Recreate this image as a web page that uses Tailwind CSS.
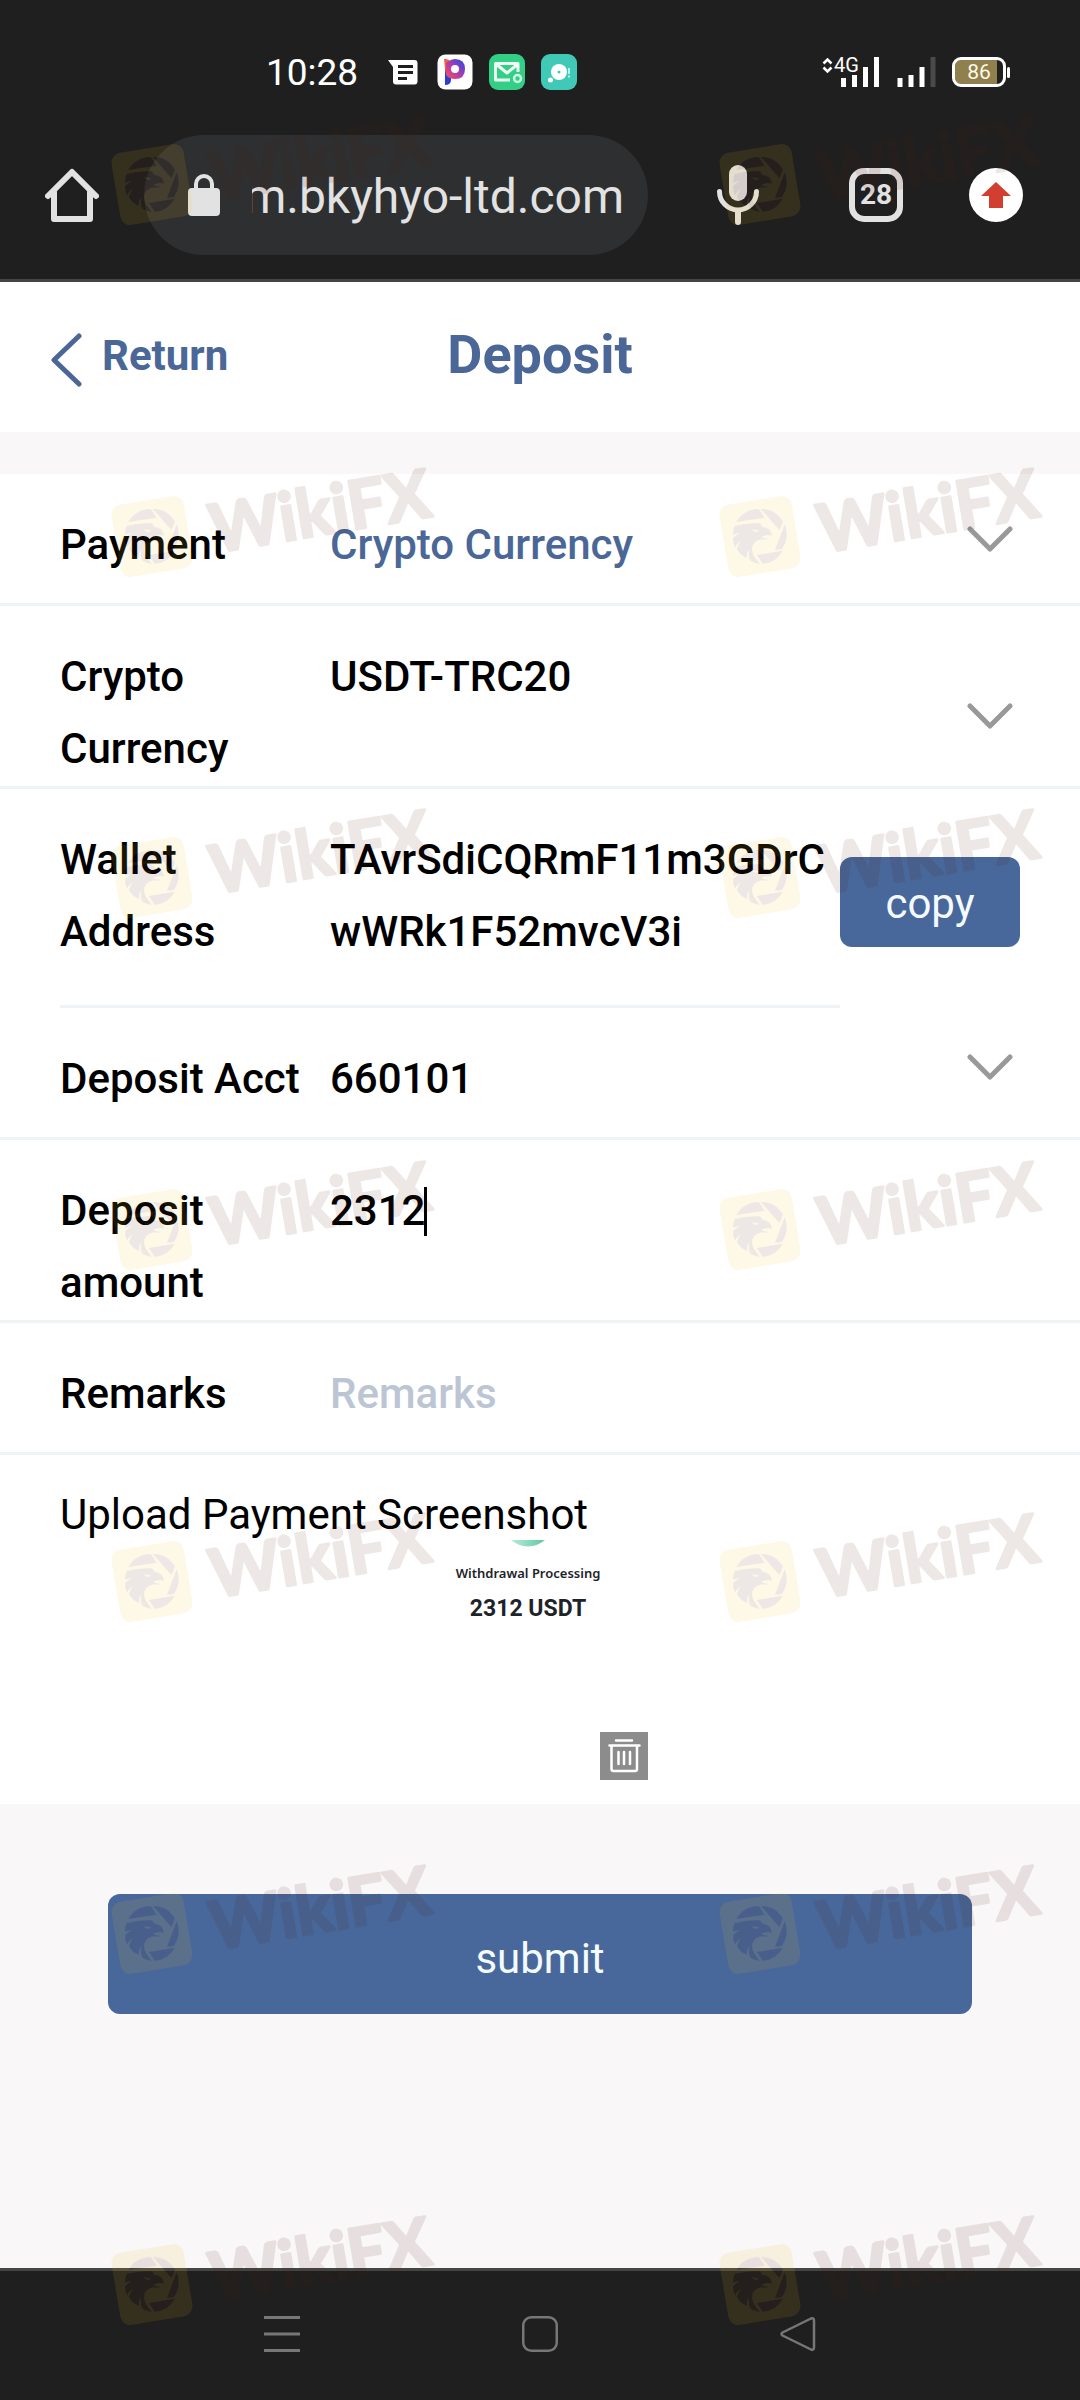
<!DOCTYPE html>
<html lang="en">
<head>
<meta charset="utf-8">
<meta name="viewport" content="width=device-width, initial-scale=1">
<title>Deposit</title>
<script src="https://cdn.jsdelivr.net/npm/@tailwindcss/browser@4"></script>
</head>
<body class="relative flex min-h-screen flex-col overflow-x-hidden bg-[#f9f7f8] font-['Roboto',sans-serif] text-black">

<header class="border-b-3 border-[#444444] bg-[#1f1f1f] pb-6">
  <!-- Status bar -->
  <div class="flex h-[135px] items-center justify-between pt-[9px] pr-[69px] pl-[266px] text-white">
    <div class="flex items-center">
      <time class="w-[122px] text-[37px] leading-none">10:28</time>
      <svg class="h-[25px] w-[30px]" viewBox="0 0 30 25" aria-hidden="true"><path fill="#fff" fill-rule="evenodd" d="M0 0h26.500q3 0 3 3v18.500q0 3-3 3H8q-3 0-3-3V7zM10 5v3h15V5zM10 11v3h15v-3zM10 17v3h9v-3z"/></svg>
      <svg class="ml-[19px] h-[36px] w-[36px]" viewBox="0 0 36 36" aria-hidden="true">
        <defs><linearGradient id="pg" x1="0" y1="1" x2="1" y2="0"><stop offset="0" stop-color="#ff4d5e"/><stop offset=".5" stop-color="#a63db0"/><stop offset="1" stop-color="#1e4be8"/></linearGradient></defs>
        <rect width="35" height="35" x=".5" y=".5" rx="8" fill="#fff"/>
        <path fill="#2a3fd0" d="M8 14h6v12q0 5-6 5z"/>
        <path fill="#ff5a3c" d="M7 5q7-1 7 6v11q-6 0-6-8z"/>
        <path fill="url(#pg)" fill-rule="evenodd" d="M12 7Q15 5 18 5q10 0 10 10t-10 10q-6 0-9-4V9zM18 11a4 4 0 1 0 0 8 4 4 0 0 0 0-8z"/>
      </svg>
      <svg class="ml-[16px] h-[36px] w-[36px]" viewBox="0 0 36 36" aria-hidden="true">
        <rect width="36" height="36" rx="9" fill="#34cf86"/>
        <path fill="none" stroke="#f0fff6" stroke-width="3" stroke-linejoin="round" d="M29 18V9.500H6.500V26H21M7 10l11 9 11-9"/>
        <circle cx="28.500" cy="24.500" r="3.500" fill="none" stroke="#c9ffe2" stroke-width="2.500"/>
      </svg>
      <svg class="ml-[16px] h-[36px] w-[36px]" viewBox="0 0 36 36" aria-hidden="true">
        <rect width="36" height="36" rx="9" fill="#41c9b8"/>
        <circle cx="18" cy="18" r="8" fill="#fff"/><circle cx="18" cy="18" r="1.500" fill="#41c9b8"/>
        <circle cx="9.500" cy="26" r="2.500" fill="#fff"/><path d="M28 14v6M28 21.500v2" stroke="#d8fff8" stroke-width="1.500"/>
      </svg>
    </div>
    <div class="flex items-center">
      <div class="relative">
        <svg class="h-[30px] w-[57px]" viewBox="0 0 57 30" aria-hidden="true">
          <path fill="none" stroke="#fff" stroke-width="2.500" d="M1.500 6.500 5.500 2.500 9.500 6.500M1.500 10.500 5.500 14.500 9.500 10.500"/>
          <path stroke="#fff" stroke-width="5" d="M21.500 21v9M32.500 18v12M43.500 10v20M54.500 0v30"/>
        </svg>
        <span class="absolute top-0 left-3 text-[20px] leading-[17px]">4G</span>
      </div>
      <svg class="ml-[17px] h-[30px] w-[40px]" viewBox="0 0 40 30" aria-hidden="true"><path stroke="#fff" stroke-width="5" d="M4 21v9M15 18v12M26 10v20"/><path stroke="#4a4a4a" stroke-width="5" d="M37 0v30"/></svg>
      <div class="relative ml-[16px]">
        <svg class="h-[30px] w-[59px]" viewBox="0 0 59 30" aria-hidden="true">
          <path fill="#90804d" d="M3 9q0-6 6-6h36v24H9q-6 0-6-6z"/>
          <rect x="1.500" y="1.500" width="51" height="27" rx="7.500" fill="none" stroke="#fff" stroke-width="3"/>
          <rect x="55" y="10" width="3" height="11" rx="1.500" fill="#fff"/>
        </svg>
        <span class="absolute inset-0 pr-[5px] text-center text-[21px] leading-[30px] text-[#fdfbe8]">86</span>
      </div>
    </div>
  </div>

  <!-- Browser toolbar -->
  <div class="flex h-[120px] items-center pr-[57px] pl-[45px]">
    <button type="button" aria-label="Home">
      <svg class="h-[54px] w-[54px]" viewBox="0 0 54 54" aria-hidden="true"><path fill="none" stroke="#e3e2e2" stroke-width="6" stroke-linejoin="round" stroke-linecap="round" d="M3 28 27 4 51 28M9 24v27h36V24"/></svg>
    </button>
    <div class="ml-[45px] flex h-full min-w-0 flex-1 items-center rounded-full bg-[#2e2f31] pr-6 pl-[44px]">
      <svg class="h-[42px] w-[32px] shrink-0" viewBox="0 0 32 42" aria-hidden="true"><path fill="none" stroke="#e3e2e2" stroke-width="4" d="M8 16V10a8 8 0 0 1 16 0v6"/><rect y="14" width="32" height="28" rx="4" fill="#e3e2e2"/></svg>
      <div class="ml-8 flex min-w-0 flex-1 justify-end overflow-hidden pt-1 text-[48px] leading-[66px] whitespace-nowrap text-[#e3e2e2]"><span>m.bkyhyo-ltd.com</span></div>
    </div>
    <button type="button" class="ml-[69px]" aria-label="Voice search">
      <svg class="h-[60px] w-[42px]" viewBox="0 0 42 60" aria-hidden="true"><rect x="12" width="18" height="36" rx="9" fill="#e3e2e2"/><path fill="none" stroke="#e3e2e2" stroke-width="5" stroke-linecap="round" d="M2.500 26.500a18.500 18.500 0 0 0 37 0"/><path fill="none" stroke="#e3e2e2" stroke-width="6" stroke-linecap="round" d="M21 46v11"/></svg>
    </button>
    <button type="button" class="ml-[90px] size-[54px] rounded-[15px] border-6 border-[#e3e2e2] text-center text-[28px] leading-[42px] font-bold text-[#e3e2e2]" aria-label="28 open tabs">28</button>
    <button type="button" class="ml-[66px]" aria-label="Update available">
      <svg class="size-[54px]" viewBox="0 0 54 54" aria-hidden="true"><circle cx="27" cy="27" r="27" fill="#fff"/><path fill="#d23f31" d="M27 14 42 28H34V40H20V28H12z"/></svg>
    </button>
  </div>
</header>

<main class="flex flex-1 flex-col">
  <div class="grid h-[150px] grid-cols-[1fr_auto_1fr] items-center bg-white px-[51px] text-[#4a6797]">
    <a href="#" class="flex items-center gap-5 text-[42px] leading-none font-bold">
      <svg class="mt-1.5 h-[54px] w-[31px]" viewBox="0 0 31 54" aria-hidden="true"><path fill="none" stroke="#4a6797" stroke-width="5" stroke-linecap="round" stroke-linejoin="round" d="M28 3 3 27 28 51"/></svg>
      <span class="pb-0.5">Return</span>
    </a>
    <h1 class="pb-1 text-[54px] leading-none font-bold">Deposit</h1>
  </div>

  <form class="mt-[42px] text-[42px]">
    <div class="bg-white">
      <div class="flex min-h-[132px] items-start border-b-3 border-[#eff3f6] px-[60px] pt-[35px] leading-[72px] font-medium">
        <label for="payment" class="w-[270px] shrink-0">Payment</label>
        <select id="payment" class="h-[72px] min-w-0 flex-1 appearance-none text-[#4a6797]"><option>Crypto Currency</option></select>
        <svg class="pointer-events-none mt-[17px] mr-[7px] h-[26px] w-[46px] shrink-0" viewBox="0 0 46 26" aria-hidden="true"><path fill="none" stroke="#999" stroke-width="5" stroke-linecap="round" stroke-linejoin="round" d="M3 3 23 23 43 3"/></svg>
      </div>
      <div class="flex items-start border-b-3 border-[#eff3f6] px-[60px] pt-[35px] pb-px leading-[72px] font-medium">
        <label for="currency" class="w-[270px] shrink-0 pr-5">Crypto Currency</label>
        <select id="currency" class="h-[72px] min-w-0 flex-1 appearance-none"><option>USDT-TRC20</option></select>
        <svg class="pointer-events-none mt-[62px] mr-[7px] h-[26px] w-[46px] shrink-0" viewBox="0 0 46 26" aria-hidden="true"><path fill="none" stroke="#999" stroke-width="5" stroke-linecap="round" stroke-linejoin="round" d="M3 3 23 23 43 3"/></svg>
      </div>
      <div class="flex items-start px-[60px]">
        <div class="flex min-h-[219px] min-w-0 flex-1 border-b-3 border-[#eff3f6] pt-[35px] leading-[72px] font-medium">
          <label for="wallet" class="w-[270px] shrink-0 pr-5">Wallet Address</label>
          <output id="wallet" class="min-w-0 flex-1 break-all">TAvrSdiCQRmF11m3GDrCwWRk1F52mvcV3i</output>
        </div>
        <button type="button" class="mt-[68px] h-[90px] w-[180px] shrink-0 rounded-xl bg-[#48679a] pt-0.5 text-[#f4fbff]">copy</button>
      </div>
      <div class="flex min-h-[132px] items-start border-b-3 border-[#eff3f6] px-[60px] pt-[35px] leading-[72px] font-medium">
        <label for="account" class="w-[270px] shrink-0">Deposit Acct</label>
        <select id="account" class="h-[72px] min-w-0 flex-1 appearance-none"><option>660101</option></select>
        <svg class="pointer-events-none mt-[11px] mr-[7px] h-[26px] w-[46px] shrink-0" viewBox="0 0 46 26" aria-hidden="true"><path fill="none" stroke="#999" stroke-width="5" stroke-linecap="round" stroke-linejoin="round" d="M3 3 23 23 43 3"/></svg>
      </div>
      <div class="flex items-start border-b-3 border-[#eff3f6] px-[60px] pt-[35px] pb-px leading-[72px] font-medium">
        <label for="amount" class="w-[270px] shrink-0 pr-5">Deposit amount</label>
        <div class="flex h-[72px] items-center">
          <input id="amount" type="text" inputmode="decimal" value="2312" class="h-[72px] w-[94px] outline-none">
          <span class="h-[49px] w-[3px] bg-black" aria-hidden="true"></span>
        </div>
      </div>
      <div class="flex min-h-[132px] items-start border-b-3 border-[#eff3f6] px-[60px] pt-[35px] leading-[72px] font-medium">
        <label for="remarks" class="w-[270px] shrink-0">Remarks</label>
        <input id="remarks" type="text" placeholder="Remarks" class="h-[72px] min-w-0 flex-1 outline-none placeholder:text-[#bcc5d3]">
      </div>
      <section class="px-[60px] pt-[39px] pb-6">
        <h2 class="leading-[42px]">Upload Payment Screenshot</h2>
        <figure class="relative mt-1 ml-[348px] flex h-[240px] w-[240px] flex-col items-center text-[#1e2329]">
          <svg class="h-[7px] w-[34px]" viewBox="0 0 34 7" aria-hidden="true"><defs><linearGradient id="arc"><stop offset="0" stop-color="#b5ecd9"/><stop offset="1" stop-color="#62c7a3"/></linearGradient></defs><path fill="url(#arc)" d="M0 0h34Q26 6.500 17 6.500T0 0z"/></svg>
          <p class="mt-[17px] font-['Noto_Sans',sans-serif] text-[13px] leading-[18px] font-semibold">Withdrawal Processing</p>
          <p class="mt-3.5 text-[23px] leading-[26px] font-bold">2312 USDT</p>
          <button type="button" class="absolute right-0 bottom-0 size-[48px] bg-[#8c8c8c]" aria-label="Delete screenshot">
            <svg class="size-[48px]" viewBox="0 0 48 48" aria-hidden="true"><path fill="none" stroke="#fff" stroke-width="2.500" stroke-linecap="round" stroke-linejoin="round" d="M16 8.500h16M9.500 13.500h30M11.500 14v23q0 2 2 2h21.500q2 0 2-2V14M18.500 20v12M24 20v12M30 20v12"/></svg>
          </button>
        </figure>
      </section>
    </div>
    <div class="px-[108px] py-[90px]">
      <button type="submit" class="h-[120px] w-full rounded-xl bg-[#48679a] pt-2 text-center text-[#f4fbff]">submit</button>
    </div>
  </form>
</main>

<nav class="flex h-[132px] items-center justify-center gap-[222px] border-t-3 border-[#444644] bg-[#1f1f1f] pb-1">
  <button type="button" aria-label="Recent apps"><svg class="size-[36px]" viewBox="0 0 36 36" aria-hidden="true"><path stroke="#777" stroke-width="3" d="M0 1.500h36M0 18h36M0 34.500h36"/></svg></button>
  <button type="button" aria-label="Home screen"><svg class="size-[36px]" viewBox="0 0 36 36" aria-hidden="true"><rect x="1.250" y="1.250" width="33.500" height="33.500" rx="8" fill="none" stroke="#777" stroke-width="2.500"/></svg></button>
  <button type="button" aria-label="Back"><svg class="size-[36px]" viewBox="0 0 36 36" aria-hidden="true"><path fill="none" stroke="#777" stroke-width="2.500" stroke-linejoin="round" d="M31 2.500 2.500 16.500q-2 1.500 0 3L31 33.500q3 1 3-2v-27q0-3-3-2z"/></svg></button>
</nav>

<!-- Watermark overlay -->
<svg class="pointer-events-none absolute inset-0 h-full w-full" aria-hidden="true">
  <defs>
    <g id="mark">
      <rect x="3.500" y="38" width="73" height="73" rx="10" fill="#f0be19" transform="rotate(-9.500 40 74.500)"/>
      <g transform="scale(.33333) translate(-180 -126)" fill="#572314">
        <path d="M229 306Q250 268 297 267L314 293z"/>
        <path d="M303 267Q347 267 369 305L358 330z"/>
        <path d="M374 313Q390 350 366 387L345 390z"/>
        <path d="M291 405 368 392Q348 429 308 431z"/>
        <path d="M224 318Q260 308 300 310L307 320Q334 323 336 347Q320 342 303 351Q312 356 324 356Q318 360 305 358Q277 364 276 386Q276 398 283 410L299 431Q280 430 270 420Q264 408 268 388Q258 400 261 414Q240 406 231 386Q234 372 243 362Q228 372 225 383Q219 370 219 355Q228 344 238 341Q227 340 219 345Q219 330 224 318z"/>
        <path fill="#f0be19" d="M275 328 298 331 291 336Q282 337 275 328z"/>
      </g>
      <text x="102" y="91" transform="rotate(-9.500 102 91)" font-family="Lato" font-weight="700" font-size="67" fill="#572314" stroke="#572314" stroke-width="3" stroke-linejoin="round">WikiFX</text>
    </g>
  </defs>
  <g opacity=".107"><use href="#mark" x="112" y="110"/><use href="#mark" x="720" y="110"/></g>
  <g opacity=".107"><use href="#mark" x="112" y="462"/><use href="#mark" x="720" y="462"/></g>
  <g opacity=".107"><use href="#mark" x="112" y="803"/><use href="#mark" x="720" y="803"/></g>
  <g opacity=".107"><use href="#mark" x="112" y="1155"/><use href="#mark" x="720" y="1155"/></g>
  <g opacity=".107"><use href="#mark" x="112" y="1507"/><use href="#mark" x="720" y="1507"/></g>
  <g opacity=".107"><use href="#mark" x="112" y="1859"/><use href="#mark" x="720" y="1859"/></g>
  <g opacity=".107"><use href="#mark" x="112" y="2210"/><use href="#mark" x="720" y="2210"/></g>
</svg>
</body>
</html>
